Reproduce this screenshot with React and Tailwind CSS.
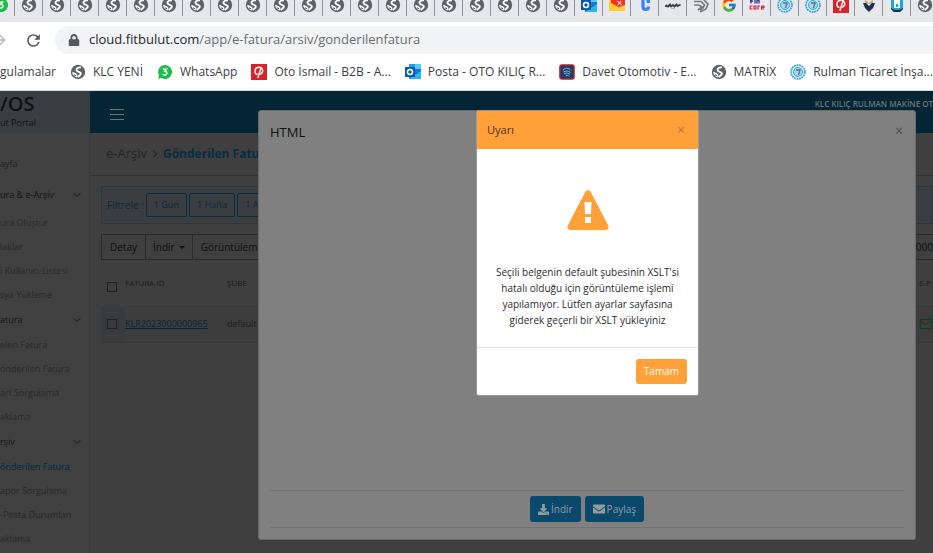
import clsx from 'clsx';
import { FaDownload, FaEnvelope, FaLock } from 'react-icons/fa';
import { FcGoogle } from 'react-icons/fc';
import { LuArrowRight, LuChevronDown, LuChevronRight, LuMail } from 'react-icons/lu';
import { MdRefresh } from 'react-icons/md';

const GlobeIcon = () => (
  <svg viewBox="0 0 16 16" className="w-4 h-4">
    <circle cx="8" cy="8" r="7.2" fill="#5f6368" />
    <path d="M11 3.400C8.200 3 6 4.500 6.600 6.300S10.600 7.600 10.800 9.400 9.200 11.800 7.600 13" fill="none" stroke="#fff" strokeWidth="1.9" />
    <path d="M2.200 7.800l3.800 1.400 1.600 1.800-1 2.400C4 12.600 2.200 10.600 2.200 7.800z" fill="#fff" />
    <path d="M3.800 10.800l2.200 1" stroke="#5f6368" strokeWidth="1.2" />
  </svg>
);

const WhatsAppIcon = () => (
  <svg viewBox="0 0 16 16" className="w-4 h-4">
    <path d="M8 1a7 7 0 1 1-3.4 13.1L1 15l1-3.5A7 7 0 0 1 8 1z" fill="#1fbd4b" />
    <path d="M6 5.2h3.6L7.8 7.4c3 0 2.6 3.8 0 3.6-1 0-1.7-.4-2-1" fill="none" stroke="#fff" strokeWidth="1.4" />
  </svg>
);

const OutlookIcon = () => (
  <svg viewBox="0 0 16 16" className="w-4 h-4">
    <path d="M4 0h12v15H4z" fill="#0f78d4" />
    <path d="M10 0h6v5h-6z" fill="#50d0f8" />
    <path d="M4 0h6v5H4z" fill="#1d9ae6" />
    <path d="M4 15l12-8v8z" fill="#2eb5ee" />
    <path d="M0 3h10v10H0z" fill="#0a59a8" />
    <circle cx="5" cy="8" r="2.5" fill="none" stroke="#fff" strokeWidth="1.5" />
  </svg>
);

const RedIcon = () => (
  <svg viewBox="0 0 16 16" className="w-4 h-4">
    <path d="M0 0h16v16H0z" fill="#d9202b" />
    <path d="M6.5 10.5C3 10 3 4.5 6.5 3.5c5.5-1.500 7 5 2.500 6.800M9.800 4.500L6.800 14" fill="none" stroke="#fff" strokeWidth="1.4" />
  </svg>
);

const SealIcon = () => (
  <svg viewBox="0 0 16 16" className="w-4 h-4">
    <circle cx="8" cy="8" r="7" fill="#d9effa" stroke="#3aa3dc" strokeWidth="1.6" strokeDasharray="2 .6" />
    <circle cx="8" cy="8" r="4.5" fill="#a9d6ee" stroke="#3aa3dc" strokeWidth="1" />
    <path d="M6 6h4L8.5 11" fill="none" stroke="#59748c" strokeWidth="1.4" />
  </svg>
);

const DavetIcon = () => (
  <svg viewBox="0 0 16 16" className="w-4 h-4">
    <rect x="1" y="1" width="14" height="14" rx="2" fill="#173f6b" stroke="#b3202e" strokeWidth="1.6" />
    <path d="M4 6.5c1-3 6-3 8 0M4.5 8c3-1.500 5-1 7 .5M5 9.500c3-.8 5 0 6 1M7 11.500c1.500-.2 2.500 0 3 .8" fill="none" stroke="#9cc3dd" strokeWidth=".9" />
  </svg>
);

const MailTabIcon = () => (
  <svg viewBox="0 0 16 16" className="w-4 h-4">
    <path d="M0 2h16v12H0z" fill="#fc3" />
    <path d="M2 0h14v8l-6 2-8-4z" fill="#f33224" />
    <path d="M8 4l5 4M12 4L9 8" stroke="#fff" strokeWidth="1" />
  </svg>
);

const CTabIcon = () => (
  <svg viewBox="0 0 16 16" className="w-4 h-4">
    <path d="M7 1.500H6v8c0 4 5.500 4 5.500 0" fill="none" stroke="#3b82f6" strokeWidth="3.2" />
    <path d="M9.500 2H13v4H9.500z" fill="#3b82f6" />
  </svg>
);

const WordTabIcon = () => (
  <svg viewBox="0 0 16 16" className="w-4 h-4">
    <path d="M0 9.500l1.500-1 1.500 1 2-2 1 2 2-1.500 1.500 1.500 2-2 1 1.500 3-1.500" fill="none" stroke="#3a3f40" strokeWidth="1.8" />
    <path d="M6 11.500h4" stroke="#9bc9a8" />
  </svg>
);

const HexTabIcon = () => (
  <svg viewBox="0 0 16 16" className="w-4 h-4">
    <path d="M1 1h8l6 6-2 5-6 3M1 8h5l3 2-4 3M1 4.500h7l3.500 3.500-1.500 3-3 2" fill="none" stroke="#77797c" strokeWidth="1.7" />
  </svg>
);

const FincoreTabIcon = () => (
  <svg viewBox="0 0 16 16" className="w-4 h-4">
    <path d="M2 6.500V2h2M1 4h3M6 2v4.500M8 6.500V3h2v3.500" fill="none" stroke="#30307a" strokeWidth="1.3" />
    <path d="M3.500 9H1.200v3h2.300M5 9h2v3H5zM9 12.500V9h2M15 12h-2.400V9H15v1.500h-2" fill="none" stroke="#d4224f" strokeWidth="1.2" />
  </svg>
);

const ShieldTabIcon = () => (
  <svg viewBox="0 0 16 16" className="w-4 h-4">
    <path d="M4 2l4 4 4-4v5H4z" fill="#c9b184" />
    <path d="M2 6h3l3 3 3-3h3l-2 5-4 4-4-4z" fill="#1b2e55" />
  </svg>
);

const PhoneTabIcon = () => (
  <svg viewBox="0 0 16 16" className="w-4 h-4">
    <path d="M2 0h12v12l-3 3H5l-3-3z" fill="#17a9dc" />
    <path d="M5 1h6v10H5z" fill="#fff" />
    <path d="M7 7h2v3H7z" fill="#17a9dc" />
    <path d="M2 11l4 2h4l4-2v1l-3 3H5l-3-3z" fill="#173348" />
  </svg>
);

const GoogleTabIcon = () => <FcGoogle className="w-4 h-4" />;

const tabs = [
  { name: 'WhatsApp', icon: WhatsAppIcon },
  ...Array.from({ length: 20 }, () => ({ name: 'Sekme', icon: GlobeIcon })),
  { name: 'Outlook', icon: OutlookIcon },
  { name: 'Mail', icon: MailTabIcon },
  { name: 'C', icon: CTabIcon },
  { name: 'Oto', icon: WordTabIcon },
  { name: 'Hex', icon: HexTabIcon },
  { name: 'Google', icon: GoogleTabIcon },
  { name: 'Fincore', icon: FincoreTabIcon },
  { name: 'Rulman', icon: SealIcon },
  { name: 'Rulman', icon: SealIcon },
  { name: 'Oto İsmail', icon: RedIcon },
  { name: 'Shield', icon: ShieldTabIcon },
  { name: 'Phone', icon: PhoneTabIcon },
  { name: 'Sekme', icon: GlobeIcon },
];

const bookmarks = [
  { label: 'KLC YENİ', icon: GlobeIcon },
  { label: 'WhatsApp', icon: WhatsAppIcon },
  { label: 'Oto İsmail - B2B - A...', icon: RedIcon },
  { label: 'Posta - OTO KILIÇ R...', icon: OutlookIcon },
  { label: 'Davet Otomotiv - E...', icon: DavetIcon },
  { label: 'MATRİX', icon: GlobeIcon },
  { label: 'Rulman Ticaret İnşa...', icon: SealIcon },
];

const menu = [
  { title: 'ura & e-Arşiv', items: ['ura Oluştur', 'laklar', 'i Kullanıcı Listesi', 'sya Yükleme'] },
  { title: 'atura', items: ['elen Fatura', 'önderilen Fatura', 'arf Sorgulama', 'aklama'] },
  { title: 'rşiv', items: ['önderilen Fatura', 'apor Sorgulama', '-Posta Durumları', 'aklama'], active: 0 },
];

const BrowserBar = () => (
  <header className="shrink-0 bg-white border-b border-[#c9dde0] overflow-hidden">
    <div className="h-[22px] bg-[#e7e8ec] overflow-hidden">
      <div className="flex -ml-[13px]">
        {tabs.map((t, i) => (
          <button key={i} aria-label={t.name} className="w-7 h-4 shrink-0 flex justify-center items-center border-r border-[#8d9095]">
            <span className="-mt-[6px]"><t.icon /></span>
          </button>
        ))}
      </div>
    </div>
    <div className="flex items-center h-9">
      <button aria-label="İleri" className="-ml-2 text-[#b5b7ba]"><LuArrowRight className="w-4 h-4" /></button>
      <button aria-label="Yenile" className="ml-4 text-[#55585c]"><MdRefresh className="w-[19px] h-[19px]" /></button>
      <div className="flex items-center flex-1 h-7 ml-3 pl-[13px] rounded-l-full bg-[#f1f3f4] text-[13px] text-[#6b6e72]">
        <FaLock className="w-3 h-3 mr-[9px] text-[#55585c]" />
        <span className="text-[#26282b]">cloud.fitbulut.com</span>/app/e-fatura/arsiv/gonderilenfatura
      </div>
    </div>
    <nav className="flex items-center h-8 pb-1 text-xs text-[#3c4043] whitespace-nowrap">
      <a href="#">gulamalar</a>
      {bookmarks.map(b => (
        <a key={b.label} href="#" className="flex items-center gap-[7px] ml-[14px]">
          <b.icon />
          {b.label}
        </a>
      ))}
    </nav>
  </header>
);

const Sidebar = () => (
  <aside className="w-[90px] shrink-0 bg-[#404040] border-r border-[#3a3a3a] text-[9px] whitespace-nowrap overflow-hidden">
    <div className="h-[42px] bg-[#3a3e40] text-[#101216]">
      <div className="text-xl leading-[26px] font-semibold">/OS</div>
      <div className="leading-3">ut Portal</div>
    </div>
    <a href="#" className="flex items-center h-[26px] mt-[18px] mb-[5px] text-[#1f1f1f]">ayfa</a>
    {menu.map((m, i) => (
      <div key={m.title}>
        <a href="#" className={clsx('flex items-center justify-between h-[26px] pr-[6px] text-[#171717]', i === 0 && 'mb-[3px]')}>
          {m.title}
          <LuChevronDown className="w-3 h-3" />
        </a>
        {m.items.map((item, j) => (
          <a key={j} href="#" className={clsx('flex items-center h-6', m.active === j ? 'text-[#06283c]' : 'text-[#2a2a2a]')}>{item}</a>
        ))}
      </div>
    ))}
  </aside>
);

const Content = () => (
  <main className="flex-1 min-w-0 bg-[#3f3f3f] text-[#1c1c1c] whitespace-nowrap overflow-hidden">
    <div className="flex items-start justify-between h-[42px] pl-5 bg-[#042536] text-[#6a7478]">
      <button aria-label="Menü" className="flex flex-col gap-1 mt-[18px]">
        <span className="w-[14px] h-px bg-[#6a7478]"></span>
        <span className="w-[14px] h-px bg-[#6a7478]"></span>
        <span className="w-[14px] h-px bg-[#6a7478]"></span>
      </button>
      <span className="mt-[7px] text-[8px] leading-3 font-semibold">KLC KILIÇ RULMAN MAKİNE OT</span>
    </div>
    <div className="flex items-center gap-[2px] h-[43px] pl-4 border-b border-[#333] text-[13px]">
      <span className="text-[#252525]">e-Arşiv</span>
      <LuChevronRight className="w-3 h-3" />
      <h1 className="text-xs font-bold text-[#082c42]">Gönderilen Fatura</h1>
    </div>
    <div className="ml-[11px] mt-[10px]">
      <div className="flex items-center h-[38px] pl-[5px] gap-[2px] bg-[#3a3e41] border border-[#2f373b] text-[#0c2a3c] text-[10px]">
        Filtrele :
        {['1 Gün', '1 Hafta', '1 Ay'].map(f => (
          <button key={f} className="h-6 px-[7px] rounded-xs border border-[#0c2a3c] text-[9px]">{f}</button>
        ))}
      </div>
      <div className="flex justify-between mt-[10px] border-y border-[#2a2a2a] text-[10px] text-[#0f0f0f]">
        <div className="flex h-6">
          <button className="px-2 border-x border-[#2a2a2a]">Detay</button>
          <button className="flex items-center gap-1 px-[7px] border-r border-[#2a2a2a]">
            İndir
            <span className="border-x-[3px] border-t-[3px] border-x-transparent border-t-[#0f0f0f]"></span>
          </button>
          <button className="px-2">Görüntüleme</button>
        </div>
        <span className="leading-6">000</span>
      </div>
      <table className="w-full table-fixed text-[9px] text-left">
        <thead>
          <tr className="h-[46px]">
            <th className="w-[24px] pl-[6px] pt-2"><input type="checkbox" aria-label="Tümünü seç" className="block appearance-none w-[10px] h-[10px] border border-[#202020]" /></th>
            <th className="w-[102px] font-normal text-[8px]">FATURA ID</th>
            <th className="font-normal text-[8px]">ŞUBE</th>
            <th className="w-[14px] font-normal text-[8px]">E-P</th>
          </tr>
        </thead>
        <tbody>
          <tr className="h-9 border-y border-[#393939] bg-[#3d3d3d]">
            <td className="pl-[6px] bg-[#3a3b3d]"><input type="checkbox" aria-label="KLR2023000000965" className="block appearance-none w-[10px] h-[10px] border border-[#202020]" /></td>
            <td><a href="#" className="underline text-[#06253c]">KLR2023000000965</a></td>
            <td>default</td>
            <td><LuMail className="w-[14px] h-[14px] text-[#12401a]" /></td>
          </tr>
        </tbody>
      </table>
    </div>
  </main>
);

const HtmlModal = () => (
  <section role="dialog" aria-label="HTML" className="absolute left-[258px] right-[17px] top-[19px] bottom-[13px] flex flex-col px-[11px] pb-[11px] rounded-[3px] bg-[#808080] border border-[#6a6a6a] text-[#101010]">
    <div className="flex justify-between items-center h-11 text-[13px]">
      <h2>HTML</h2>
      <button aria-label="Kapat" className="px-px pb-1 text-sm text-[#4c4c4c]">×</button>
    </div>
    <div className="flex-1"></div>
    <div className="flex justify-center items-center gap-1 h-[38px] border-y border-[#737373] text-[10px] text-[#959ca0]">
      <button className="flex items-center gap-[2px] h-[26px] px-2 rounded-[3px] bg-[#0a486c]"><FaDownload className="w-[11px] h-[11px]" />İndir</button>
      <button className="flex items-center gap-[2px] h-[26px] px-2 rounded-[3px] bg-[#0a486c]"><FaEnvelope className="w-3 h-3" />Paylaş</button>
    </div>
  </section>
);

const WarningDialog = () => (
  <section role="alertdialog" aria-label="Uyarı" className="absolute left-[476px] top-[19px] w-[223px] rounded-[3px] overflow-hidden bg-white border border-[#999] text-[#2b2b2b]">
    <div className="flex justify-between items-center h-[38px] px-[10px] bg-[#ffa038]">
      <h3 className="text-[11px] font-medium text-[#4a3010]">Uyarı</h3>
      <button aria-label="Kapat" className="px-[3px] text-sm text-[#b07c40]">×</button>
    </div>
    <div className="px-4 pt-[41px] pb-[19px] text-center text-[10px] leading-4">
      <svg viewBox="0 0 42 40" className="w-[42px] h-10 mx-auto mb-[34px]">
        <path d="M18.5 1.5Q21 -1 23.5 1.5L41.5 36Q42 39.5 39 40H3Q0 39.5 .5 36z" fill="#ffa038" />
        <path d="M17.5 12h7l-.5 12h-6zM18 27h6v6h-6z" fill="#fff" />
      </svg>
      <p>Seçili belgenin default şubesinin XSLT'si hatalı olduğu için görüntüleme işlemi yapılamıyor. Lütfen ayarlar sayfasına giderek geçerli bir XSLT yükleyiniz</p>
    </div>
    <div className="flex justify-end p-[11px] border-t border-[#e0e3e6]">
      <button className="h-[25px] px-2 rounded-[3px] bg-[#ffa038] text-white text-[10px] font-medium">Tamam</button>
    </div>
  </section>
);

const App = () => (
  <div className="flex flex-col h-screen overflow-hidden font-['Open_Sans','Noto_Sans',sans-serif]">
    <BrowserBar />
    <div className="relative flex flex-1 min-h-0">
      <Sidebar />
      <Content />
      <HtmlModal />
      <WarningDialog />
    </div>
  </div>
);

export default App;
